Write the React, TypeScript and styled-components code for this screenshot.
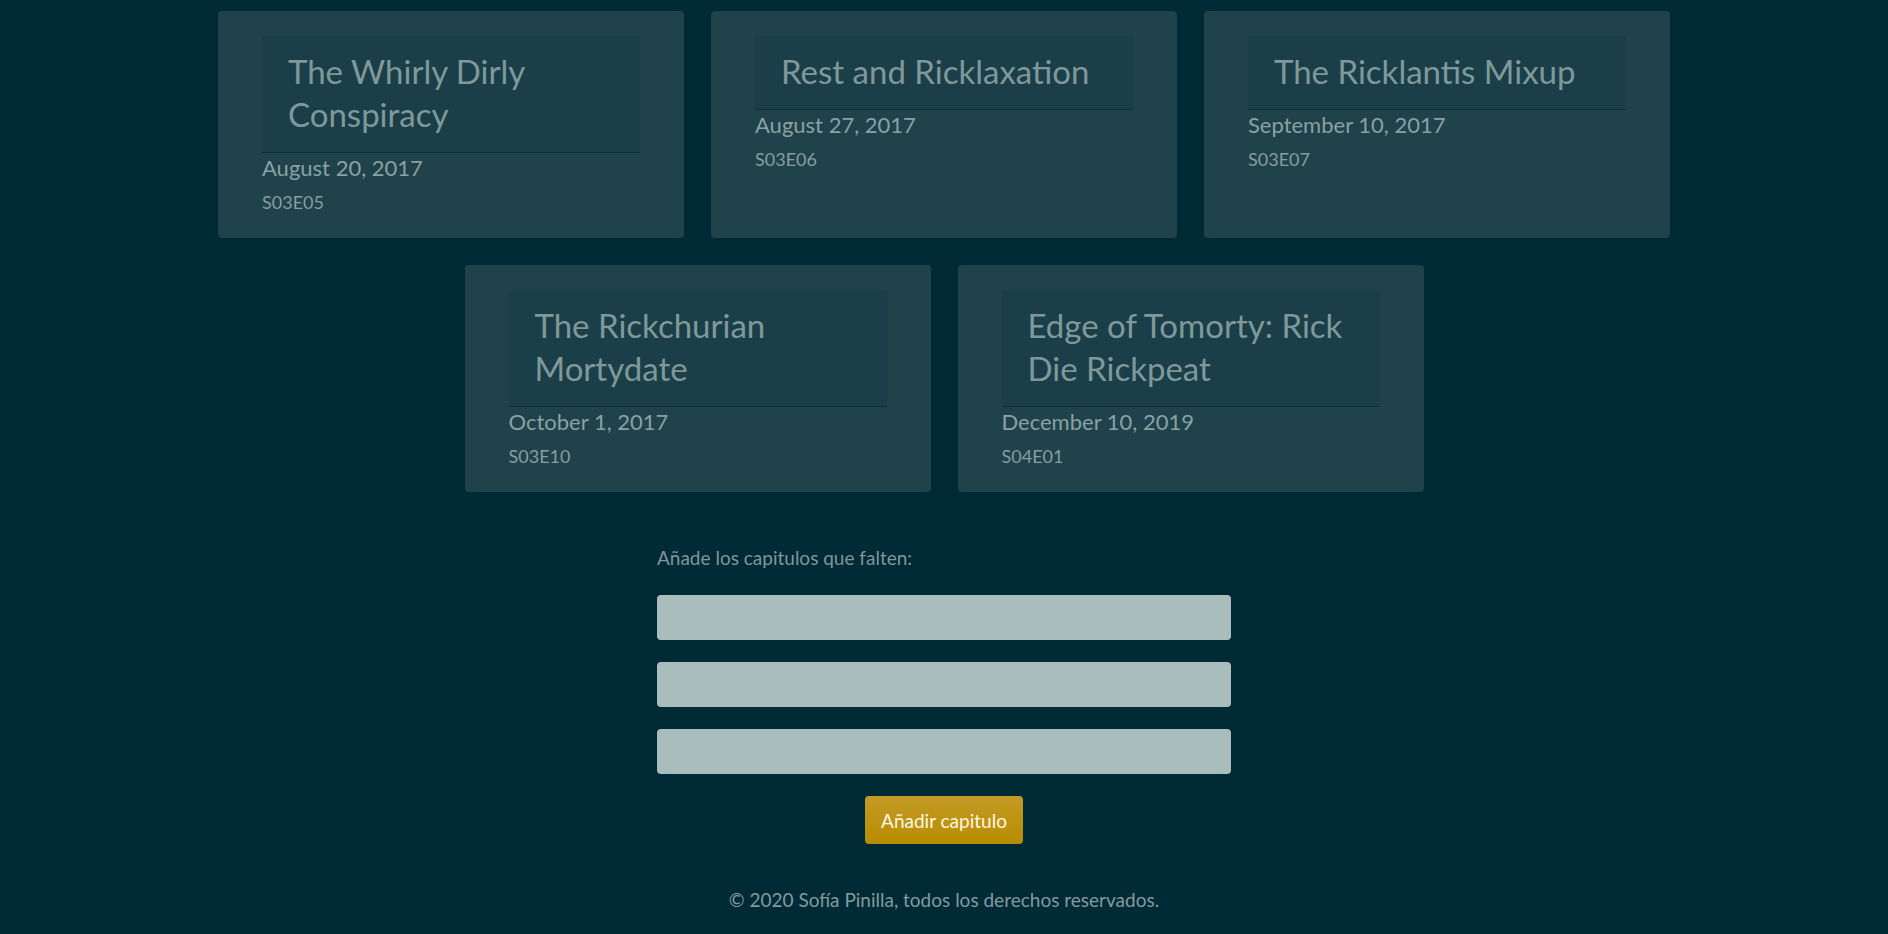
import React from "react";
import styled, { createGlobalStyle } from "styled-components";

const GlobalStyle = createGlobalStyle`
  html, body {
    margin: 0;
    padding: 0;
    background: #012a37;
  }
  body {
    font-family: Lato, "Noto Sans", sans-serif;
  }
`;

const Page = styled.main`
  min-height: 934px;
  box-sizing: border-box;
  padding-top: 11px;
  display: flex;
  flex-direction: column;
  align-items: center;
`;

const EpisodeGrid = styled.section`
  width: 1453px;
  display: flex;
  flex-wrap: wrap;
  justify-content: center;
  gap: 27px;
`;

const Card = styled.article`
  width: 466px;
  box-sizing: border-box;
  padding: 25px 44px 22px;
  background: #1f424b;
  border-radius: 4px;
`;

const CardHeader = styled.h2`
  margin: 0;
  padding: 14px 26px 16px;
  background: #1b3f48;
  border-bottom: 1px solid #0b2f39;
  font-size: 33px;
  line-height: 43px;
  font-weight: 400;
  color: #7f999b;
`;

const AirDate = styled.p`
  margin: 1px 0 6px;
  font-size: 22px;
  line-height: 28px;
  color: #8aa1a3;
`;

const EpisodeCode = styled.p`
  margin: 0;
  font-size: 18px;
  line-height: 28px;
  color: #879d9f;
`;

const Form = styled.form`
  width: 574px;
  margin-top: 54px;
  display: flex;
  flex-direction: column;
`;

const Label = styled.label`
  font-size: 19px;
  line-height: 24px;
  color: #7f9799;
  margin-bottom: 25px;
`;

const Field = styled.input`
  height: 45px;
  box-sizing: border-box;
  border: none;
  border-radius: 4px;
  background: #a9bdbc;
  margin-bottom: 22px;
`;

const SubmitButton = styled.button`
  align-self: center;
  width: 158px;
  height: 48px;
  border: none;
  border-radius: 4px;
  background: linear-gradient(#c39b26, #b88c00);
  color: #fff8e6;
  font-family: Lato, "Noto Sans", sans-serif;
  font-size: 19px;
`;

const Footer = styled.footer`
  margin-top: 44px;
  font-size: 19px;
  line-height: 24px;
  color: #839b9d;
`;

const episodes = [
  { name: "The Whirly Dirly Conspiracy", date: "August 20, 2017", code: "S03E05" },
  { name: "Rest and Ricklaxation", date: "August 27, 2017", code: "S03E06" },
  { name: "The Ricklantis Mixup", date: "September 10, 2017", code: "S03E07" },
  { name: "The Rickchurian Mortydate", date: "October 1, 2017", code: "S03E10" },
  { name: "Edge of Tomorty: Rick Die Rickpeat", date: "December 10, 2019", code: "S04E01" },
];

export default function App() {
  return (
    <>
      <GlobalStyle />
      <Page>
        <EpisodeGrid>
          {episodes.map((ep) => (
            <Card key={ep.code}>
              <CardHeader>{ep.name}</CardHeader>
              <AirDate>{ep.date}</AirDate>
              <EpisodeCode>{ep.code}</EpisodeCode>
            </Card>
          ))}
        </EpisodeGrid>

        <Form onSubmit={(e) => e.preventDefault()}>
          <Label>Añade los capitulos que falten:</Label>
          <Field type="text" />
          <Field type="text" />
          <Field type="text" />
          <SubmitButton type="submit">Añadir capitulo</SubmitButton>
        </Form>

        <Footer>© 2020 Sofía Pinilla, todos los derechos reservados.</Footer>
      </Page>
    </>
  );
}
